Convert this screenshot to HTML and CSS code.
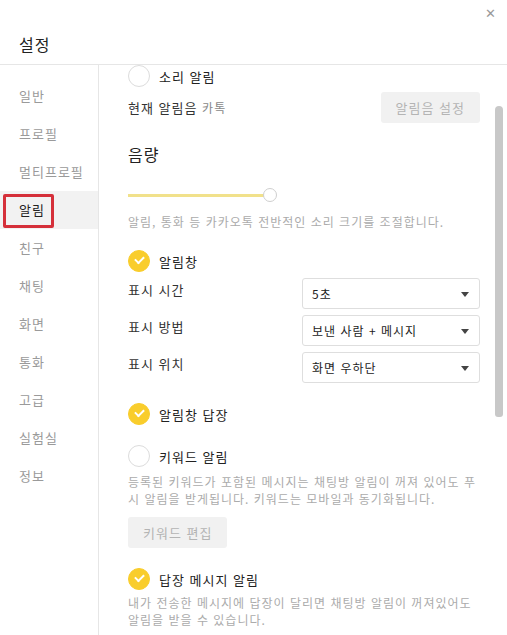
FILE: index.html
```html
<!DOCTYPE html>
<html lang="ko">
<head>
    <meta charset="UTF-8">
    <meta name="viewport" content="width=device-width, initial-scale=1.0">
    <title>설정</title>
    <link rel="stylesheet" href="styles.css">
</head>
<body>
    <div id="window">
        <div id="header">
            <h1>설정</h1>
            <span class="close">&#x2715;</span>
        </div>

        <div id="main">
            <ul id="menu">
                <li>일반</li>
                <li>프로필</li>
                <li>멀티프로필</li>
                <li class="active">알림<span class="mark"></span></li>
                <li>친구</li>
                <li>채팅</li>
                <li>화면</li>
                <li>통화</li>
                <li>고급</li>
                <li>실험실</li>
                <li>정보</li>
            </ul>

            <div id="content">
                <div class="check">
                    <span class="circle"></span>
                    <span>소리 알림</span>
                </div>

                <div class="sound-row">
                    <span>현재 알림음 <em>카톡</em></span>
                    <button class="btn">알림음 설정</button>
                </div>

                <h2>음량</h2>
                <div class="slider">
                    <div class="track"></div>
                    <div class="thumb"></div>
                </div>
                <p class="desc first">알림, 통화 등 카카오톡 전반적인 소리 크기를 조절합니다.</p>

                <div class="check on gap">
                    <span class="circle"></span>
                    <span>알림창</span>
                </div>

                <div class="field">
                    <label>표시 시간</label>
                    <div class="select">5초</div>
                </div>
                <div class="field">
                    <label>표시 방법</label>
                    <div class="select">보낸 사람 + 메시지</div>
                </div>
                <div class="field">
                    <label>표시 위치</label>
                    <div class="select">화면 우하단</div>
                </div>

                <div class="check on gap">
                    <span class="circle"></span>
                    <span>알림창 답장</span>
                </div>

                <div class="check gap">
                    <span class="circle"></span>
                    <span>키워드 알림</span>
                </div>
                <p class="desc keyword-desc">등록된 키워드가 포함된 메시지는 채팅방 알림이 꺼져 있어도 푸시 알림을 받게됩니다. 키워드는 모바일과 동기화됩니다.</p>
                <button class="btn keyword">키워드 편집</button>

                <div class="check on gap">
                    <span class="circle"></span>
                    <span>답장 메시지 알림</span>
                </div>
                <p class="desc">내가 전송한 메시지에 답장이 달리면 채팅방 알림이 꺼져있어도 알림을 받을 수 있습니다.</p>

                <div class="scrollbar"></div>
            </div>
        </div>
    </div>
</body>
</html>
```

FILE: styles.css
```css
body {
    font-family: "Noto Sans CJK KR", "Noto Sans", sans-serif;
    margin: 0;
    padding: 0;
    background-color: #fff;
    color: #222;
    letter-spacing: 1px;
}

#window {
    width: 507px;
    height: 635px;
    overflow: hidden;
}

#header {
    position: relative;
    height: 65px;
    border-bottom: 1px solid #e6e6e6;
    box-sizing: border-box;
}

h1 {
    margin: 0;
    padding: 33px 0 0 19px;
    font-size: 16px;
    font-weight: normal;
    line-height: 22px;
    color: #222;
}

.close {
    position: absolute;
    top: 3px;
    right: 10px;
    font-size: 13px;
    color: #999;
}

#main {
    display: flex;
    height: 570px;
}

#menu {
    list-style: none;
    margin: 0;
    padding: 12px 0 0 0;
    width: 98px;
    border-right: 1px solid #e6e6e6;
}

#menu li {
    position: relative;
    height: 38px;
    line-height: 38px;
    padding-left: 19px;
    font-size: 13px;
    color: #9a9a9a;
}

#menu li.active {
    background-color: #f2f2f2;
    color: #222;
}

.mark {
    position: absolute;
    left: 3px;
    top: 3px;
    width: 51px;
    height: 34px;
    border: 3px solid #d5303a;
    border-radius: 2px;
    box-sizing: border-box;
}

#content {
    position: relative;
    flex: 1;
    padding: 0 27px 0 29px;
    overflow: hidden;
}

.check {
    display: flex;
    align-items: center;
    gap: 9px;
    height: 22px;
    font-size: 13px;
    color: #222;
}

.check.gap {
    margin-top: 20px;
}

.circle {
    width: 22px;
    height: 22px;
    border: 1px solid #dcdcdc;
    border-radius: 50%;
    box-sizing: border-box;
    position: relative;
}

.check.on .circle {
    background-color: #f9cd2c;
    border-color: #f9cd2c;
}

.check.on .circle::after {
    content: "";
    position: absolute;
    left: 6px;
    top: 5px;
    width: 7px;
    height: 4px;
    border-left: 2px solid #fff;
    border-bottom: 2px solid #fff;
    transform: rotate(-45deg);
}

.sound-row {
    display: flex;
    justify-content: space-between;
    align-items: center;
    margin-top: 5px;
    font-size: 13px;
    color: #333;
}

.sound-row em {
    font-style: normal;
    font-size: 12px;
    color: #888;
}

.btn {
    font-family: inherit;
    letter-spacing: 1px;
    height: 31px;
    padding: 0 15px;
    border: none;
    border-radius: 3px;
    background-color: #f1f1f1;
    color: #b4b4b4;
    font-size: 13px;
    cursor: pointer;
}

.btn.keyword {
    display: block;
    margin-top: 10px;
}

h2 {
    margin: 20px 0 0 0;
    font-size: 16px;
    font-weight: normal;
    line-height: 22px;
    color: #222;
}

.slider {
    position: relative;
    width: 149px;
    height: 14px;
    margin-top: 23px;
}

.track {
    position: absolute;
    left: 0;
    right: 8px;
    top: 6px;
    height: 3px;
    background-color: #f1e18b;
}

.thumb {
    position: absolute;
    right: 0;
    top: 0;
    width: 14px;
    height: 14px;
    border: 1px solid #cfcfcf;
    border-radius: 50%;
    background-color: #fff;
    box-sizing: border-box;
}

.desc {
    margin: 4px 0 0 0;
    width: 352px;
    font-size: 12px;
    line-height: 17px;
    color: #ababab;
    word-break: break-all;
}

.desc.first {
    margin-top: 11px;
}

.desc.keyword-desc {
    margin-top: 6px;
}

.field {
    display: flex;
    justify-content: space-between;
    align-items: flex-start;
    margin-top: 6px;
}

.field label {
    font-size: 13px;
    line-height: 24px;
    color: #333;
}

.select {
    position: relative;
    width: 178px;
    height: 31px;
    line-height: 29px;
    padding-left: 9px;
    border: 1px solid #dedede;
    border-radius: 3px;
    box-sizing: border-box;
    font-size: 12px;
    color: #222;
}

.select::after {
    content: "";
    position: absolute;
    right: 10px;
    top: 13px;
    border-left: 4px solid transparent;
    border-right: 4px solid transparent;
    border-top: 5px solid #444;
}

.scrollbar {
    position: absolute;
    right: 4px;
    top: 41px;
    width: 8px;
    height: 311px;
    border-radius: 4px 4px 3px 3px;
    background-color: #c8c8c8;
}
```
